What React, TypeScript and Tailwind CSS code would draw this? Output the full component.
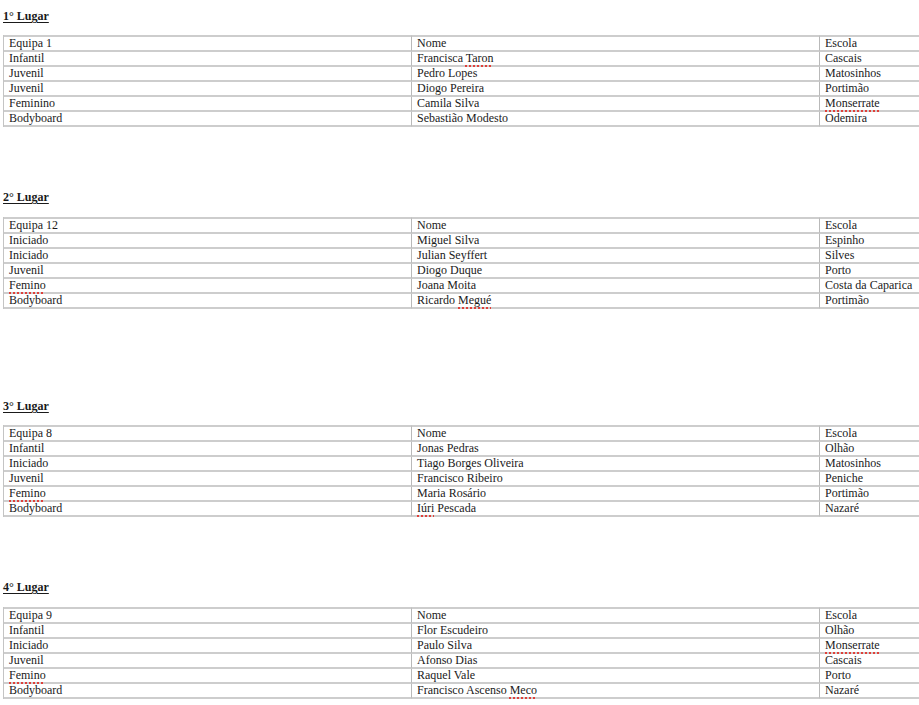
import React from "react";

type Cell = React.ReactNode;

// red dotted squiggle like a spell checker mark
function Sp({ children }: { children: React.ReactNode }) {
  return (
    <span className="underline decoration-dotted decoration-[#e0403a] decoration-2 underline-offset-[3px]">
      {children}
    </span>
  );
}

const places: { title: string; gap: string; tableGap: string; rows: Cell[][] }[] = [
  {
    title: "1° Lugar",
    gap: "mt-[9px]",
    tableGap: "mt-[12px]",
    rows: [
      ["Equipa 1", "Nome", "Escola"],
      ["Infantil", <>Francisca <Sp>Taron</Sp></>, "Cascais"],
      ["Juvenil", "Pedro Lopes", "Matosinhos"],
      ["Juvenil", "Diogo Pereira", "Portimão"],
      ["Feminino", "Camila Silva", <Sp>Monserrate</Sp>],
      ["Bodyboard", "Sebastião Modesto", "Odemira"],
    ],
  },
  {
    title: "2° Lugar",
    gap: "mt-[63px]",
    tableGap: "mt-[13px]",
    rows: [
      ["Equipa 12", "Nome", "Escola"],
      ["Iniciado", "Miguel Silva", "Espinho"],
      ["Iniciado", "Julian Seyffert", "Silves"],
      ["Juvenil", "Diogo Duque", "Porto"],
      [<Sp>Femino</Sp>, "Joana Moita", "Costa da Caparica"],
      ["Bodyboard", <>Ricardo <Sp>Megué</Sp></>, "Portimão"],
    ],
  },
  {
    title: "3° Lugar",
    gap: "mt-[90px]",
    tableGap: "mt-[12px]",
    rows: [
      ["Equipa 8", "Nome", "Escola"],
      ["Infantil", "Jonas Pedras", "Olhão"],
      ["Iniciado", "Tiago Borges Oliveira", "Matosinhos"],
      ["Juvenil", "Francisco Ribeiro", "Peniche"],
      [<Sp>Femino</Sp>, "Maria Rosário", "Portimão"],
      ["Bodyboard", <><Sp>Iúri</Sp> Pescada</>, "Nazaré"],
    ],
  },
  {
    title: "4° Lugar",
    gap: "mt-[63px]",
    tableGap: "mt-[13px]",
    rows: [
      ["Equipa 9", "Nome", "Escola"],
      ["Infantil", "Flor Escudeiro", "Olhão"],
      ["Iniciado", "Paulo Silva", <Sp>Monserrate</Sp>],
      ["Juvenil", "Afonso Dias", "Cascais"],
      [<Sp>Femino</Sp>, "Raquel Vale", "Porto"],
      ["Bodyboard", <>Francisco Ascenso <Sp>Meco</Sp></>, "Nazaré"],
    ],
  },
];

function PlaceTable({ rows, gap }: { rows: Cell[][]; gap: string }) {
  return (
    <table
      className={
        gap +
        " ml-[3px] w-[1224px] table-fixed border-separate border-spacing-0 border-l border-[#c4c4c4]"
      }
    >
      <tbody>
        {rows.map((row, i) => (
          <tr key={i}>
            {row.map((cell, j) => (
              <td
                key={j}
                className={
                  "h-[15px] border-b-2 border-[#cdcdcd] px-[5px] pt-0 pb-0 align-middle text-[12px] leading-[13px] whitespace-nowrap " +
                  (i === 0 ? "border-t-2 " : "") +
                  (j > 0 ? "border-l border-l-[#b9b9b9] " : "") +
                  (j === 0 ? "w-[407px]" : "w-[408px]")
                }
              >
                {cell}
              </td>
            ))}
          </tr>
        ))}
      </tbody>
    </table>
  );
}

export default function App() {
  return (
    <div className="h-[705px] w-[919px] overflow-hidden bg-white text-[#1a1a1a] font-['Liberation_Serif','Times_New_Roman',serif]">
      {places.map((p) => (
        <section key={p.title} className={p.gap}>
          <h2 className="pl-[3px] text-[12px] leading-[14px] font-bold underline underline-offset-2">
            {p.title}
          </h2>
          <PlaceTable rows={p.rows} gap={p.tableGap} />
        </section>
      ))}
    </div>
  );
}
